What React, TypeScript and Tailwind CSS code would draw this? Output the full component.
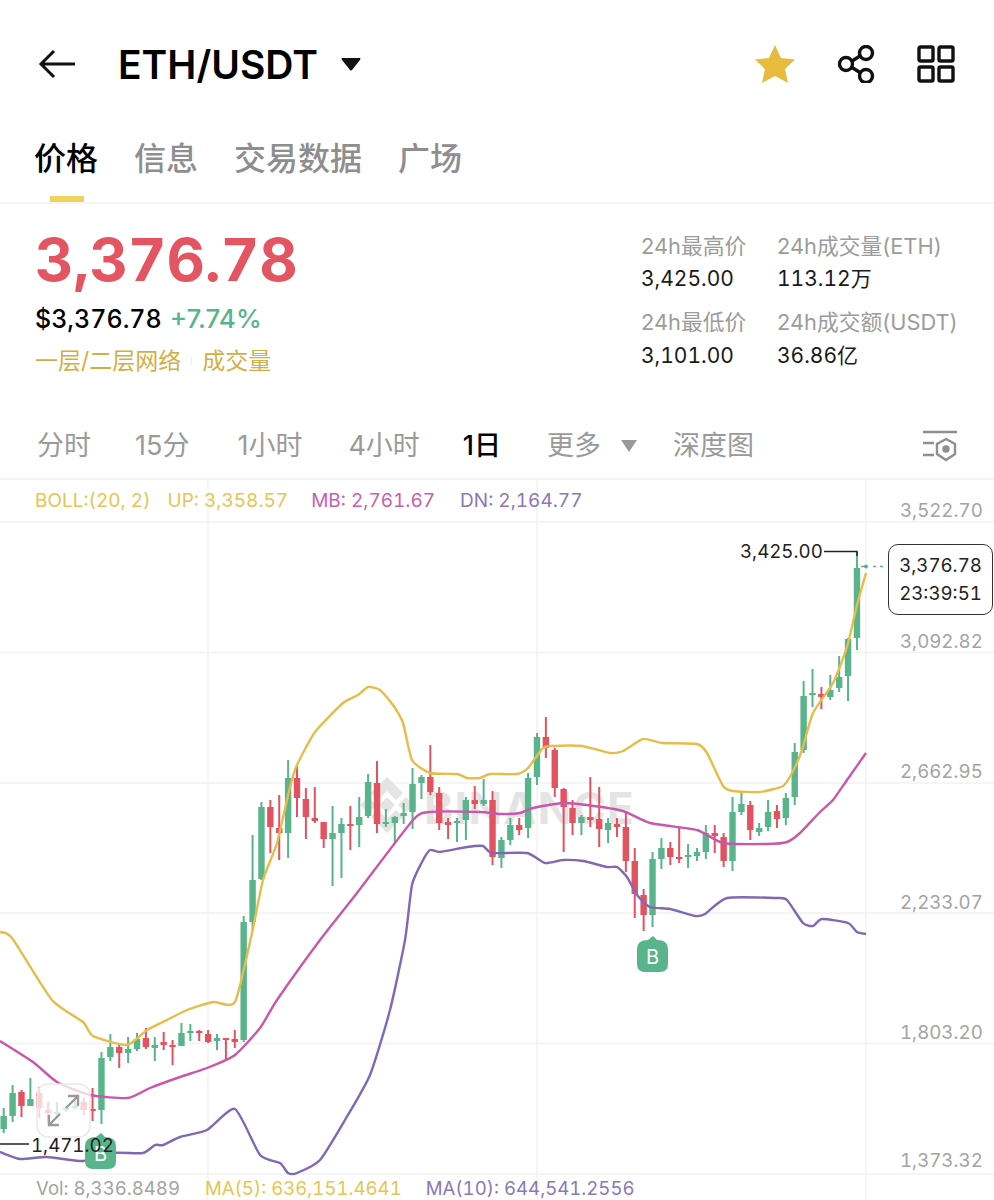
// x of candle k = 3.7 + 8.888 * k
// [high, bodyTop, bodyBottom, low, up?]
type Candle = [number, number, number, number, 0 | 1];

const candles: Candle[] = [
  [1108, 1116, 1129, 1133, 1], [1085, 1093, 1116, 1122, 1], [1090, 1092, 1106, 1117, 0], [1078, 1099, 1106, 1106, 1],
  [1087, 1093, 1108, 1118, 0], [1102, 1110, 1113, 1123, 0], [1102, 1112, 1114, 1117, 1], [1106, 1108, 1110, 1112, 1],
  [1100, 1106, 1108, 1109, 1], [1098, 1102, 1110, 1115, 0], [1088, 1109, 1110, 1121, 0], [1052, 1058, 1110, 1124, 1],
  [1034, 1047, 1057, 1061, 1], [1043, 1047, 1053, 1068, 0], [1037, 1049, 1053, 1063, 1], [1033, 1039, 1049, 1051, 1],
  [1028, 1038, 1047, 1049, 0], [1037, 1045, 1048, 1061, 1], [1032, 1042, 1045, 1050, 0], [1040, 1045, 1047, 1065, 0],
  [1023, 1033, 1046, 1046, 1], [1024, 1031, 1033, 1041, 1], [1030, 1031, 1033, 1041, 0], [1030, 1034, 1042, 1043, 0],
  [1034, 1038, 1041, 1050, 1], [1038, 1038, 1040, 1059, 0], [1030, 1039, 1042, 1048, 0], [916, 922, 1040, 1042, 1],
  [835, 880, 922, 930, 1], [802, 807, 879, 880, 1], [800, 807, 827, 853, 0], [795, 828, 833, 860, 0],
  [760, 778, 833, 858, 1], [765, 778, 798, 817, 0], [788, 799, 817, 839, 0], [787, 818, 821, 823, 0],
  [822, 822, 839, 848, 0], [806, 833, 839, 886, 1], [818, 824, 833, 878, 1], [806, 824, 826, 850, 0],
  [797, 817, 825, 847, 1], [774, 782, 816, 818, 1], [761, 783, 824, 833, 0], [809, 822, 824, 827, 1],
  [816, 817, 823, 843, 1], [803, 813, 816, 824, 1], [768, 784, 812, 829, 1], [775, 777, 783, 799, 1],
  [745, 777, 792, 795, 0], [787, 793, 823, 830, 0], [818, 822, 825, 839, 0], [818, 821, 823, 842, 1],
  [797, 800, 820, 840, 1], [786, 800, 804, 809, 0], [779, 800, 804, 806, 1], [791, 800, 857, 865, 0],
  [837, 840, 858, 868, 1], [818, 825, 840, 845, 1], [818, 825, 830, 835, 0], [773, 778, 828, 838, 1],
  [733, 737, 777, 785, 1], [717, 737, 748, 758, 0], [748, 750, 788, 797, 0], [788, 789, 807, 852, 0],
  [800, 808, 823, 835, 0], [815, 817, 823, 835, 1], [777, 817, 820, 827, 0], [787, 819, 829, 847, 0],
  [818, 823, 830, 843, 1], [818, 824, 827, 837, 0], [813, 827, 861, 872, 0], [848, 861, 894, 918, 0],
  [889, 895, 915, 931, 0], [852, 859, 915, 927, 1], [838, 848, 859, 869, 1], [842, 848, 857, 865, 0],
  [827, 857, 859, 863, 0], [844, 855, 857, 868, 1], [848, 852, 856, 861, 1], [825, 833, 852, 859, 1],
  [825, 833, 836, 853, 0], [833, 837, 861, 867, 0], [797, 812, 861, 871, 1], [792, 804, 812, 815, 1],
  [801, 805, 830, 840, 0], [823, 828, 832, 836, 1], [800, 812, 827, 831, 1], [805, 811, 819, 828, 0],
  [793, 798, 818, 825, 1], [743, 752, 797, 805, 1], [681, 696, 750, 753, 1], [669, 693, 695, 707, 1],
  [687, 694, 697, 709, 0], [675, 690, 697, 700, 1], [656, 677, 688, 692, 1], [638, 639, 676, 701, 1],
  [552, 568, 638, 650, 1],
];

const upper = [
  [0, 932], [12, 938], [52, 1000], [83, 1022], [93, 1036], [127, 1045], [147, 1030], [167, 1020], [187, 1010],
  [213, 1002], [235, 1002], [252, 933], [263, 880], [277, 843], [290, 787], [297, 765], [315, 732], [343, 703],
  [358, 695], [368, 687], [380, 690], [393, 705], [403, 723], [412, 760], [430, 773], [457, 774], [467, 778],
  [480, 778], [490, 774], [517, 774], [528, 768], [543, 748], [553, 746], [582, 746], [610, 753], [623, 751],
  [643, 739], [662, 743], [697, 744], [707, 753], [723, 786], [733, 791], [760, 792], [783, 786], [792, 773],
  [802, 750], [813, 713], [833, 683], [847, 647], [857, 605], [866, 573],
];

const middle = [
  [0, 1041], [33, 1062], [57, 1082], [90, 1095], [128, 1098], [150, 1088], [180, 1077], [207, 1068], [235, 1055],
  [260, 1028], [277, 1000], [320, 940], [357, 893], [413, 820], [430, 812], [480, 812], [500, 814], [520, 813],
  [533, 808], [563, 803], [587, 805], [623, 811], [650, 823], [697, 830], [723, 843], [767, 844], [787, 842],
  [800, 833], [820, 812], [833, 800], [847, 780], [866, 753],
];

const lower = [
  [0, 1152], [20, 1159], [47, 1157], [83, 1161], [113, 1153], [143, 1153], [155, 1145], [163, 1145], [180, 1137],
  [207, 1130], [235, 1109], [260, 1155], [280, 1163], [288, 1173], [297, 1173], [320, 1160], [345, 1120],
  [370, 1075], [390, 1010], [405, 940], [412, 885], [422, 862], [430, 850], [440, 852], [467, 847], [483, 846],
  [492, 853], [527, 853], [545, 863], [563, 860], [583, 861], [607, 867], [617, 867], [627, 877], [637, 895],
  [650, 907], [670, 909], [695, 916], [705, 914], [727, 898], [777, 898], [787, 900], [803, 923], [813, 926],
  [822, 919], [848, 923], [857, 932], [866, 934],
];

const axisLabels = [
  ["3,522.70", 517], ["3,092.82", 648], ["2,662.95", 778], ["2,233.07", 909], ["1,803.20", 1039], ["1,373.32", 1167],
] as const;

const gridY = [522, 652.5, 783, 913, 1043.5, 1174];
const gridX = [208, 537, 866];

// rounded polyline through the sampled points, low tension so the sharp turns stay sharp
function smooth(p: number[][]) {
  let d = `M${p[0][0]} ${p[0][1]}`;
  for (let i = 0; i < p.length - 1; i++) {
    const a = p[i - 1] || p[i];
    const b = p[i];
    const c = p[i + 1];
    const e = p[i + 2] || c;
    d += ` C${b[0] + (c[0] - a[0]) / 10} ${b[1] + (c[1] - a[1]) / 10} ${c[0] - (e[0] - b[0]) / 10} ${c[1] - (e[1] - b[1]) / 10} ${c[0]} ${c[1]}`;
  }
  return d;
}

function BuyBadge({ x, y }: { x: number; y: number }) {
  return (
    <g transform={`translate(${x} ${y})`}>
      <path
        d="M16 0 L20 4 Q31 4 31 13 V28 Q31 36 23 36 H8 Q0 36 0 28 V13 Q0 4 11 4 Z"
        className="fill-[#58b48a]"
      />
      <text x="15.5" y="28" textAnchor="middle" className="fill-white text-[20px]">
        B
      </text>
    </g>
  );
}

function Chart() {
  return (
    <svg viewBox="0 480 994 720" className="block h-[720px] w-[994px]">
      {gridY.map((y) => (
        <line key={y} x1="0" x2="994" y1={y} y2={y} className="stroke-[#f2f2f2]" strokeWidth="1.5" />
      ))}
      {gridX.map((x) => (
        <line key={x} x1={x} x2={x} y1="480" y2="1200" className="stroke-[#f2f2f2]" strokeWidth="1.5" />
      ))}

      {/* watermark */}
      <g className="fill-[#e4e4e4]">
        <path d="M387 777 L403 793 L396 800 L387 791 L378 800 L371 793 Z" />
        <path d="M387 833 L371 817 L378 810 L387 819 L396 810 L403 817 Z" />
        <path d="M368 797 L376 805 L368 813 L360 805 Z" />
        <path d="M406 797 L414 805 L406 813 L398 805 Z" />
        <path d="M387 797 L395 805 L387 813 L379 805 Z" />
      </g>
      <text x="424" y="824" className="fill-[#e4e4e4] text-[44px] font-bold" letterSpacing="1.5">
        BINANCE
      </text>

      {candles.map(([high, top, bottom, low, up], k) => {
        const x = 3.7 + 8.888 * k;
        const fill = up ? "#58b48a" : "#e2535f";
        return (
          <g key={k} fill={fill}>
            <rect x={x - 1} y={high} width="2" height={low - high} />
            <rect x={x - 3.2} y={top} width="6.4" height={Math.max(bottom - top, 2)} />
          </g>
        );
      })}

      <path d={smooth(lower)} fill="none" stroke="#7f68b4" strokeWidth="2.4" />
      <path d={smooth(middle)} fill="none" stroke="#c957ab" strokeWidth="2.4" />
      <path d={smooth(upper)} fill="none" stroke="#e6bd4a" strokeWidth="2.4" />

      {/* fullscreen button */}
      <rect x="37" y="1084" width="53" height="53" rx="11" className="fill-white/75 stroke-[#e9e9e9]" strokeWidth="1.5" />
      <g fill="none" stroke="#9a9a9a" strokeWidth="2.4">
        <path d="M49 1125 L60 1114 M66 1108 L78 1096" />
        <path d="M49 1115 V1125 H59" />
        <path d="M68 1096 H78 V1106" />
      </g>

      {axisLabels.map(([label, y]) => (
        <text key={label} x="900" y={y} className="fill-[#a3a3a3] text-[18.7px] tabular-nums">
          {label}
        </text>
      ))}

      {/* high / low markers */}
      <path d="M824 551.5 H857 V556" fill="none" stroke="#222" strokeWidth="1.5" />
      <text x="740" y="558" className="fill-[#222] text-[18.7px] tabular-nums">
        3,425.00
      </text>
      <BuyBadge x={637} y={936} />
      <BuyBadge x={85} y={1133} />
      <path d="M0 1144 H29" fill="none" stroke="#222" strokeWidth="1.5" />
      <text x="31" y="1152" className="fill-[#222] text-[18.7px] tabular-nums">
        1,471.02
      </text>

      {/* last price */}
      <circle cx="866" cy="566.5" r="2" fill="#58b48a" />
      <path d="M861 566.5 H866 M873 566.5 H876 M880 566.5 H883" stroke="#58b48a" strokeWidth="1.5" />
    </svg>
  );
}

const tabs = ["信息", "交易数据", "广场"];
const stats = [
  ["24h最高价", "24h成交量(ETH)"],
  ["3,425.00", "113.12万"],
  ["24h最低价", "24h成交额(USDT)"],
  ["3,101.00", "36.86亿"],
];

export default function App() {
  return (
    <div className="h-[1200px] w-[994px] overflow-hidden bg-white font-['Inter','Noto_Sans_CJK_SC',sans-serif] text-black">
      {/* top bar */}
      <header className="flex h-[128px] items-center pl-[38px] pr-[39px]">
        <svg width="38" height="32" viewBox="0 0 38 32" fill="none" stroke="#111" strokeWidth="3">
          <path d="M37 16 H4 M16 3 L3 16 L16 29" />
        </svg>
        <h1 className="ml-[42px] text-[39px] leading-none font-semibold">ETH/USDT</h1>
        <svg className="ml-[23px]" width="20" height="14" viewBox="0 0 20 14" fill="#111">
          <path d="M1 1 H19 Q20 1 19 3 L11 13 Q10 14 9 13 L1 3 Q0 1 1 1 Z" />
        </svg>
        <div className="ml-auto flex items-center gap-[42px]">
          <svg width="40" height="38" viewBox="0 0 40 38" className="fill-[#e8bb3e]">
            <path d="M20 0 L26 13 L40 14.5 L30 24 L33 38 L20 31 L7 38 L10 24 L0 14.5 L14 13 Z" />
          </svg>
          <svg width="38" height="38" viewBox="0 0 38 38" fill="none" stroke="#111" strokeWidth="3.4">
            <circle cx="29" cy="8" r="6.5" />
            <circle cx="9" cy="19" r="6.5" />
            <circle cx="29" cy="31" r="6.5" />
            <path d="M15 16 L23 11 M15 22.500 L23 27.500" />
          </svg>
          <svg width="38" height="38" viewBox="0 0 38 38" fill="none" stroke="#111" strokeWidth="3.4">
            <rect x="2" y="2" width="14" height="14" rx="1.500" />
            <rect x="22" y="2" width="14" height="14" rx="1.500" />
            <rect x="2" y="22" width="14" height="14" rx="1.500" />
            <rect x="22" y="22" width="14" height="14" rx="1.500" />
          </svg>
        </div>
      </header>

      {/* tabs */}
      <nav className="flex h-[76px] gap-[36px] border-b-2 border-[#f5f5f5] pl-[34px] text-[32px] leading-[42px] font-medium text-[#8e8e8e]">
        <div className="flex flex-col items-center justify-between pt-[10px] text-black">
          <span>价格</span>
          <span className="h-[6px] w-[34px] translate-x-px bg-[#f0d25f]" />
        </div>
        {tabs.map((tab) => (
          <div key={tab} className="pt-[10px]">
            {tab}
          </div>
        ))}
      </nav>

      {/* price summary */}
      <section className="flex h-[206px]">
        <div className="pl-[35px] pt-[25px]">
          <div className="text-[59.5px] leading-[60px] font-bold text-[#e35560] tabular-nums">3,376.78</div>
          <div className="mt-[14px] flex items-baseline gap-[8px] leading-[32px] font-medium">
            <span className="text-[25px] tabular-nums">$3,376.78</span>
            <span className="text-[26px] text-[#58b48a]">+7.74%</span>
          </div>
          <div className="mt-[10px] flex items-center text-[23px] leading-[32px] text-[#d3ae45]">
            <span>一层/二层网络</span>
            <span className="mx-[10px] h-[8px] w-px bg-[#ececec]" />
            <span>成交量</span>
          </div>
        </div>
        <div className="ml-auto grid w-[353px] grid-cols-[136px_1fr] grid-rows-[32px_44px_33px_32px] pt-[26px]">
          {stats.map(([left, right], i) => (
            <div
              key={left}
              className={`contents ${
                i % 2 === 0
                  ? "text-[21.8px] leading-[32px] text-[#9c9c9c]"
                  : "text-[21px] leading-[34px] text-[#1a1a1a] tabular-nums"
              }`}
            >
              <span>{left}</span>
              <span>{right}</span>
            </div>
          ))}
        </div>
      </section>

      {/* timeframes */}
      <div className="flex h-[70px] items-center border-b-2 border-[#f5f5f5] pl-[37px] pr-[36px] pt-[4px] text-[27px] text-[#9a9a9a]">
        <span>分时</span>
        <span className="ml-[44px]">15分</span>
        <span className="ml-[48px]">1小时</span>
        <span className="ml-[46px]">4小时</span>
        <span className="ml-[43px] font-medium text-black">1日</span>
        <span className="ml-[46px] flex items-center gap-[20px]">
          更多
          <svg width="16" height="12" viewBox="0 0 16 12" fill="#9a9a9a">
            <path d="M0 0 H16 L8 12 Z" />
          </svg>
        </span>
        <span className="ml-[36px]">深度图</span>
        <svg className="ml-auto" width="36" height="32" viewBox="0 0 36 32" fill="none" stroke="#8f8f8f" strokeWidth="2.4">
          <path d="M1 2 H35 M1 13 H12 M1 25 H12" />
          <path d="M24 9 L33 14 V24 L24 30 L15 24 V14 Z" />
          <circle cx="24" cy="19" r="2.500" fill="#8f8f8f" />
        </svg>
      </div>

      {/* chart */}
      <div className="relative h-[720px] overflow-hidden">
        <Chart />
        <div className="absolute left-[35px] top-[8px] flex text-[19px] leading-[26px] tabular-nums">
          <span className="text-[#e6c552]">BOLL:(20, 2)</span>
          <span className="ml-[17px] text-[#e6c552]">UP: 3,358.57</span>
          <span className="ml-[23px] text-[#c85fb0]">MB: 2,761.67</span>
          <span className="ml-[25px] text-[#8a78b8]">DN: 2,164.77</span>
        </div>
        <div className="absolute left-[888px] top-[64px] flex h-[71px] w-[105px] flex-col items-center justify-center rounded-[10px] border border-[#333] bg-white text-[18.7px] leading-[28px] text-[#222] tabular-nums">
          <span>3,376.78</span>
          <span>23:39:51</span>
        </div>
        <div className="absolute -bottom-px left-[36px] flex text-[18.6px] leading-[26px] tabular-nums">
          <span className="text-[#a3a3a3]">Vol: 8,336.8489</span>
          <span className="ml-[25px] text-[#e6c552]">MA(5): 636,151.4641</span>
          <span className="ml-[24px] text-[#8a78b8]">MA(10): 644,541.2556</span>
        </div>
      </div>
    </div>
  );
}
